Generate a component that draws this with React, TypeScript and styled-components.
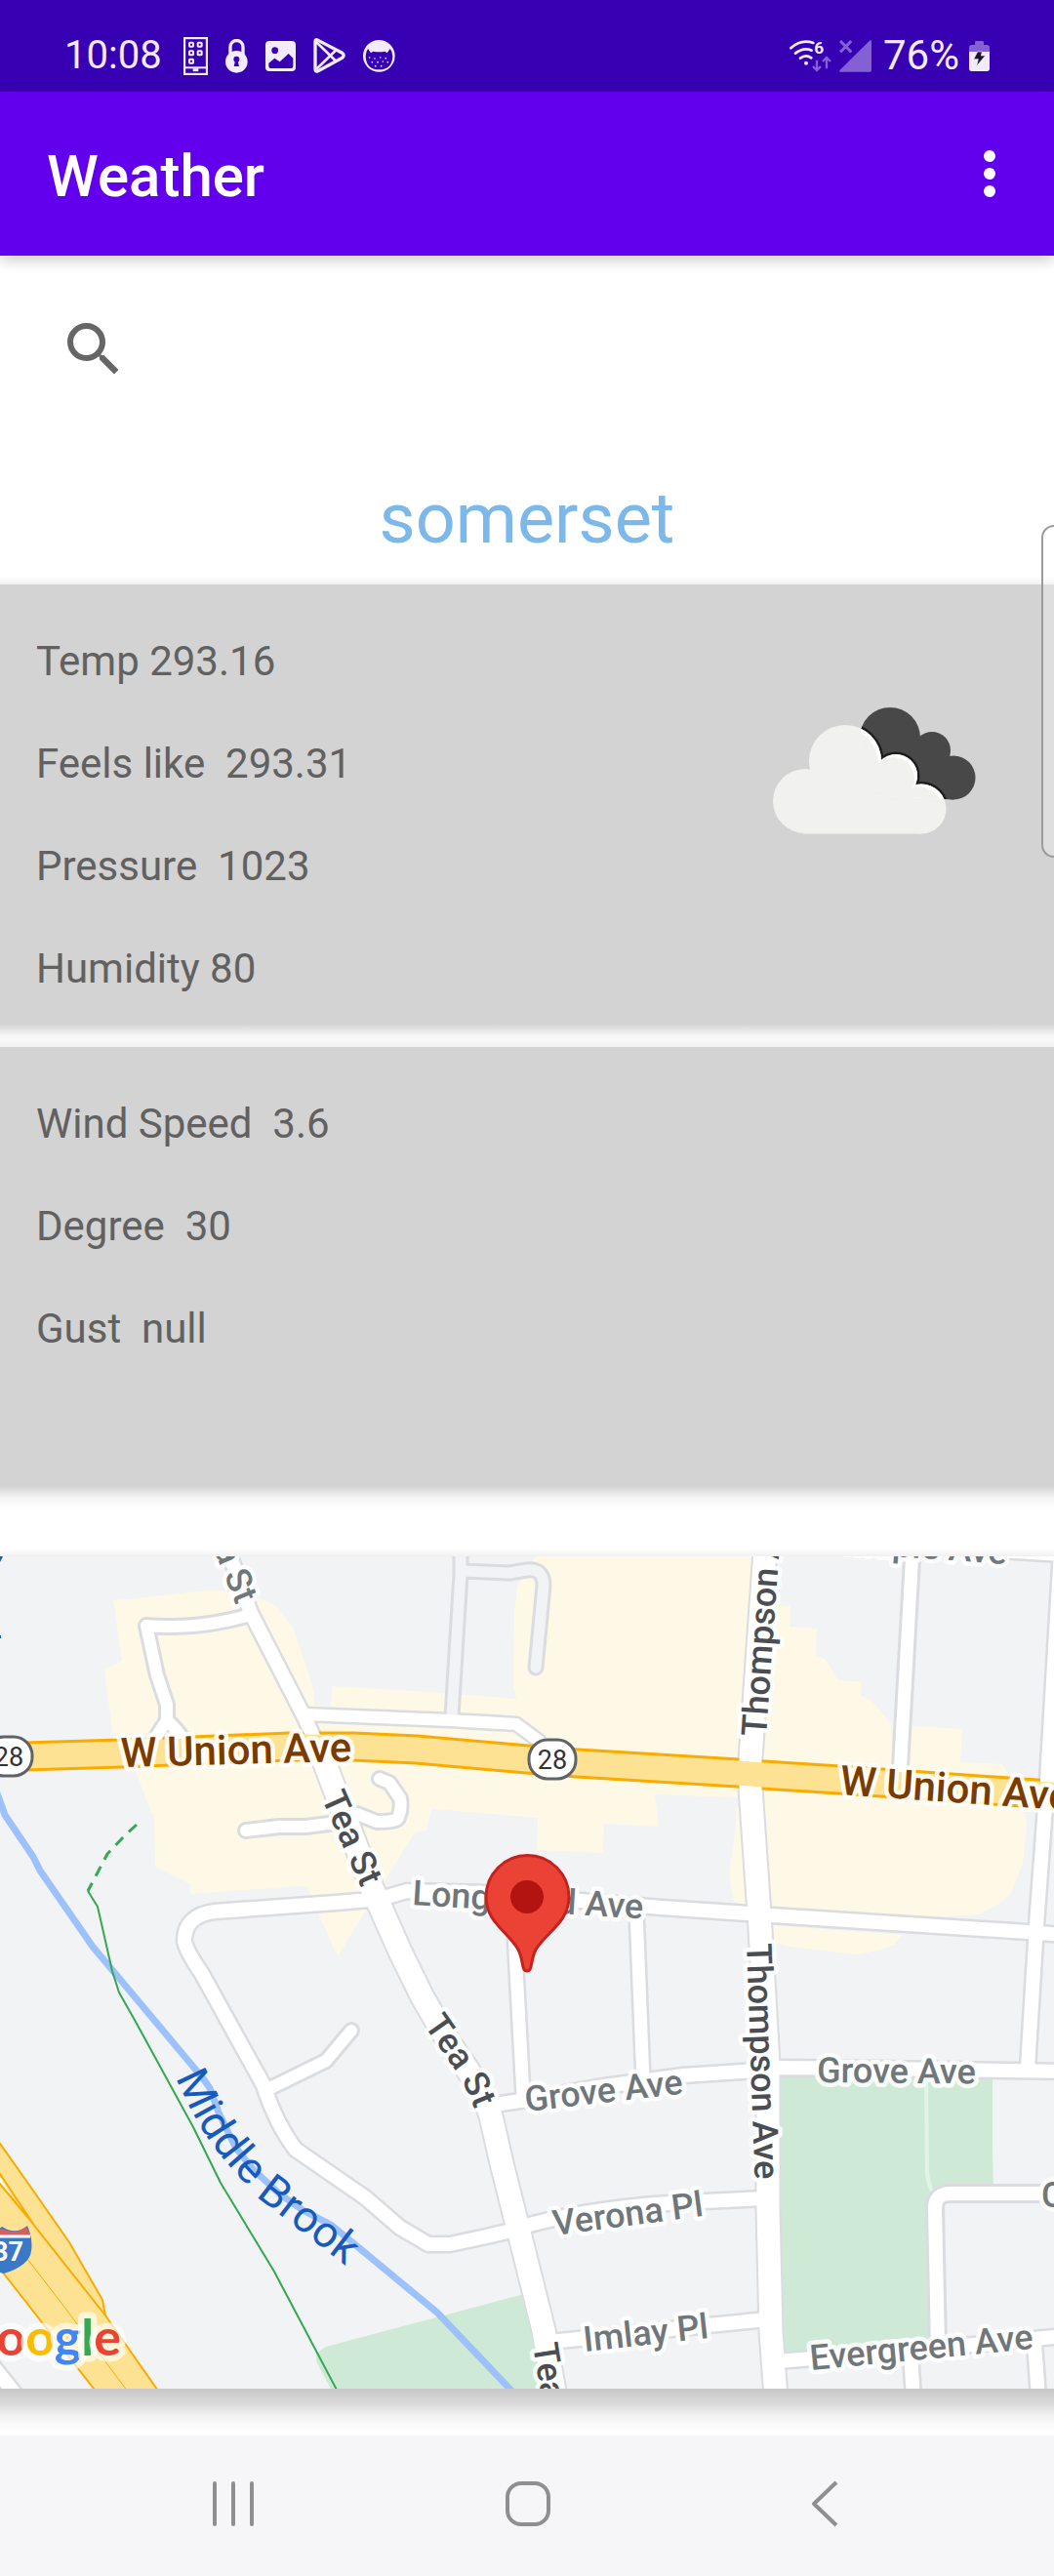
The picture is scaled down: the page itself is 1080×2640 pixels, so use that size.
import React from "react";
import styled, { createGlobalStyle } from "styled-components";

const GlobalStyle = createGlobalStyle`
  *, *::before, *::after { box-sizing: border-box; }
  body {
    margin: 0;
    background: #fff;
    font-family: Roboto, "Noto Sans", sans-serif;
  }
  button {
    border: 0;
    padding: 0;
    background: none;
    font: inherit;
    color: inherit;
    cursor: pointer;
  }
  svg { display: block; }
`;

const INK = "#f1ebfc";
const DIM = "#8360d3";
const BAR = "#3700b3";

const Screen = styled.div`
  position: relative;
  display: flex;
  flex-direction: column;
  min-height: 100vh;
  overflow: hidden;
`;

const StatusBar = styled.div`
  display: flex;
  align-items: center;
  justify-content: space-between;
  height: 94px;
  padding: 20px 66px 0;
  background: ${BAR};
  color: ${INK};
  line-height: 48px;
`;

const StatusGroup = styled.div<{ $gap: number }>`
  display: flex;
  align-items: center;
  gap: ${(p) => p.$gap}px;
`;

const Clock = styled.span`
  margin-right: 4px;
  font-size: 40px;
`;

const Battery = styled.span`
  margin: 0 2px 0 4px;
  font-size: 42px;
`;

const AppBar = styled.header`
  position: relative;
  z-index: 1;
  display: flex;
  align-items: center;
  justify-content: space-between;
  height: 168px;
  padding: 0 30px 0 48px;
  background: #6200ee;
  color: #fff;
  box-shadow: 0 4px 14px rgba(0, 0, 0, 0.22);
`;

const AppTitle = styled.h1`
  margin: 0;
  padding-top: 6px;
  font-size: 60px;
  font-weight: 500;
  line-height: 72px;
`;

const IconButton = styled.button`
  display: block;
  width: 72px;
  height: 72px;
`;

const Main = styled.main`
  display: flex;
  flex-direction: column;
`;

const SearchRow = styled.div`
  padding: 60px 60px 96px;
  color: #666;
`;

const City = styled.h2`
  margin: 0 0 25px;
  color: #7cb8e9;
  font-size: 72px;
  font-weight: 400;
  line-height: 84px;
  text-align: center;
`;

/* A full-width block: its shadow runs evenly from edge to edge. */
const Raised = styled.section`
  position: relative;

  &::before,
  &::after {
    content: "";
    position: absolute;
    left: 0;
    right: 0;
    pointer-events: none;
  }
  &::before {
    bottom: 100%;
    height: 8px;
    background: linear-gradient(transparent, rgba(0, 0, 0, 0.06));
  }
`;

const Card = styled(Raised)`
  display: flex;
  justify-content: space-between;
  min-height: 451px;
  margin-bottom: 23px;
  padding: 26px 80px 5px 37px;
  background: #d3d3d3;
  color: #616161;

  &::after {
    top: 100%;
    height: 23px;
    background: linear-gradient(rgba(0, 0, 0, 0.16), rgba(0, 0, 0, 0.04) 50%, transparent);
  }
`;

const Reading = styled.p`
  margin: 0;
  font-size: 42px;
  line-height: 105px;
  white-space: pre;
`;

const Sky = styled.div`
  padding-top: 100px;
`;

const MapCard = styled(Raised)`
  margin-top: 48px;
  background: #f1f3f4;

  &::after {
    top: 100%;
    height: 45px;
    background: linear-gradient(
      rgba(0, 0, 0, 0.22),
      rgba(0, 0, 0, 0.15) 33%,
      rgba(0, 0, 0, 0.06) 60%,
      rgba(0, 0, 0, 0.02) 80%,
      transparent
    );
  }
`;

const MapCanvas = styled.svg`
  width: 100%;
  height: auto;
  font-family: Roboto, sans-serif;
`;

const EdgeHandle = styled.div`
  position: absolute;
  z-index: 2;
  top: 538px;
  right: 0;
  width: 13px;
  height: 341px;
  border: 2px solid #9b9b9b;
  border-right: 0;
  border-radius: 14px 0 0 14px;
  background: rgba(255, 255, 255, 0.25);
`;

const NavBar = styled.nav`
  display: flex;
  justify-content: center;
  height: 144px;
  margin-top: auto;
  padding: 0 0 4px 2px;
  background: #f6f6f8;
  color: #8f8f8f;
`;

const NavButton = styled.button`
  display: flex;
  align-items: center;
  justify-content: center;
  width: 28%;
`;

/* ---------- status icons ---------- */

const PhoneIcon = () => (
  <svg width="25" height="39" viewBox="0 0 75 117" fill="none" stroke={INK}>
    <rect x="3" y="3" width="69" height="111" strokeWidth="7" />
    {[[18, 17], [44, 17], [18, 43], [44, 43], [18, 68]].map(([x, y]) => (
      <rect key={`${x}-${y}`} x={x} y={y} width="12" height="12" rx="2" strokeWidth="6" />
    ))}
    <path d="M3 94h69" strokeWidth="6" />
    <path d="M29 101h17" strokeWidth="9" />
  </svg>
);

const LockIcon = () => (
  <svg width="23" height="35" viewBox="0 0 69 105">
    <path d="M15 52V24a19 19 0 0 1 39 0v28" fill="none" stroke={INK} strokeWidth="10" />
    <circle cx="34" cy="70" r="34" fill={INK} />
    <circle cx="34" cy="62" r="9" fill={BAR} />
    <path d="M31 64h6l5 20H26z" fill={BAR} />
  </svg>
);

const PictureIcon = () => (
  <svg width="31" height="31" viewBox="0 0 93 93">
    <rect width="93" height="93" rx="12" fill={INK} />
    <circle cx="29" cy="29" r="10" fill={BAR} />
    <path d="M10 68 28 53l16 11 27-25 14 14v25q0 6-6 6H16q-6 0-6-6z" fill={BAR} />
  </svg>
);

const PlayIcon = () => (
  <svg width="33" height="36" viewBox="0 0 99 108" fill="none" stroke={INK} strokeWidth="10" strokeLinejoin="round">
    <path d="M6 11q0-9 9-4l74 39q9 7 0 15L15 101q-9 4-9-5z" />
    <path d="m9 12 62 60M9 96l62-60" strokeWidth="8" />
  </svg>
);

const CatIcon = () => (
  <svg width="33" height="33" viewBox="0 0 99 99">
    <circle cx="49" cy="49" r="49" fill={INK} />
    <path d="M8 50q0-14 7-23l9 13 7-5q18 4 36 0l7 5 9-13q8 9 8 23-2 41-42 41Q10 91 8 50z" fill={BAR} />
    <g fill={INK}>
      {[[20, 54], [36, 57], [53, 54], [70, 56], [28, 68], [45, 68], [61, 66], [76, 68], [38, 80], [56, 80]].map(([x, y]) => (
        <circle key={`${x}-${y}`} cx={x} cy={y} r="2.5" />
      ))}
    </g>
  </svg>
);

const WifiIcon = () => (
  <svg width="43" height="33" viewBox="0 0 129 99">
    <g fill="none" stroke={INK} strokeWidth="8" strokeLinecap="round">
      <path d="M4 25Q36-4 73 9" />
      <path d="M18 41q26-20 50-9" />
      <path d="M33 56q17-13 34-1" />
    </g>
    <circle cx="51" cy="71" r="6" fill={INK} />
    <text x="76" y="43" fontSize="52" fontWeight="700" fill={INK}>6</text>
    <g fill="none" stroke={DIM} strokeWidth="7">
      <path d="M84 62v31m-12-12 12 12 12-12" />
      <path d="M114 88V54m-12 12 12-12 12 12" />
    </g>
  </svg>
);

const SignalIcon = () => (
  <svg width="33" height="33" viewBox="0 0 99 99">
    <path d="M3 98q-5-1-1-6L93 2q6-4 6 3v88q0 5-5 5z" fill={DIM} />
    <path d="m3 3 34 34M37 3 3 37" stroke={DIM} strokeWidth="9" />
  </svg>
);

const BatteryIcon = () => (
  <svg width="21" height="31" viewBox="0 0 63 93">
    <path d="M18 12V4q0-4 4-4h19q4 0 4 4v8h10q8 0 8 8v14H0V20q0-8 8-8z" fill={DIM} />
    <path d="M0 33h63v52q0 8-8 8H8q-8 0-8-8z" fill={INK} />
    <path d="M26 33h14l-3 12h13L23 77l5-21H14z" fill="#1b1624" stroke={INK} strokeWidth="2" />
  </svg>
);

/* ---------- weather icon ---------- */

const cloudShape = (
  <>
    <circle cx="33" cy="96" r="33" />
    <circle cx="74" cy="55" r="37" />
    <circle cx="126" cy="70" r="22" />
    <circle cx="152" cy="104" r="25.5" />
    <path d="M30 129V95l20-30h85l17 40v24.500H32z" />
  </>
);

const darkShape = (
  <>
    <circle cx="120" cy="31" r="31" />
    <circle cx="163" cy="44" r="19" />
    <circle cx="185" cy="72" r="22.500" />
    <path d="M100 30h50l32 20 3 44.500L100 90z" />
  </>
);

const CloudsIcon = () => (
  <svg width="208" height="130" viewBox="0 0 208 130" role="img" aria-label="Broken clouds">
    <clipPath id="rear-cloud">{darkShape}</clipPath>
    <g fill="#484849">{darkShape}</g>
    <g clipPath="url(#rear-cloud)" fill="#1d1d1e" stroke="#1d1d1e" strokeWidth="5">{cloudShape}</g>
    <g fill="#f1f1ef">{cloudShape}</g>
    <g clipPath="url(#rear-cloud)">
      <g fill="#fff">{cloudShape}</g>
      <g fill="#f1f1ef" transform="translate(-3 3)">{cloudShape}</g>
    </g>
  </svg>
);

/* ---------- map data ---------- */

type Road = { d: string; outer: number; inner: number; fill?: string };

const WHITE = "#fff";
const LAND = "#f1f3f4";

const roads: Road[] = [
  { d: "M463 164 472 18V-4M474 15 522 17 540 14Q557 12 557 30L549 114", outer: 17, inner: 11, fill: LAND },
  { d: "M257 60Q214 72 179 72 162 72 150 71L161 122 171 152V168L157 190M171 168Q182 178 191 192", outer: 18, inner: 12 },
  { d: "M252 281 286 277H313L345 273 366 264 386 272Q406 272 408 268 412 258 410 248L399 232 389 228", outer: 18, inner: 12 },
  { d: "M312 162 461 168 529 172 552 189", outer: 17, inner: 12 },
  { d: "M379 352 344 355 220 364Q189 368 189 394 190 403 207 428L270 542Q283 582 303 608L374 657 410 688 439 705H461L494 698 524 691", outer: 19, inner: 14 },
  { d: "M279 544 334 517 360 486", outer: 18, inner: 12 },
  { d: "M386 352 417 343 499 345 595 353 678 360 766 366 791 368 1053 385 1090 388", outer: 19, inner: 14 },
  { d: "M526 348 528 405 536 552", outer: 18, inner: 13 },
  { d: "M652 362 659 538", outer: 18, inner: 13 },
  { d: "M506 562 540 557 612 544 700 532 775 527 800 524 900 525 1090 528", outer: 19, inner: 14 },
  { d: "M530 688 571 678Q640 664 722 661L782 658", outer: 19, inner: 14 },
  { d: "M564 805 726 788 786 782", outer: 19, inner: 14 },
  { d: "M796 825 833 822 957 812 1090 799", outer: 19, inner: 14 },
  { d: "M933 818 936 862M1060 806 1064 862", outer: 19, inner: 14 },
  { d: "M1090 653H974Q958 653 958 668L961 810", outer: 20, inner: 14 },
  { d: "M935-6 922 225", outer: 19, inner: 13 },
  { d: "M1087-6 1073 230 1062 378 1053 524", outer: 19, inner: 14 },
  { d: "M850-17 1090-2", outer: 19, inner: 14 },
  { d: "M-8 829 20 864", outer: 19, inner: 14 },
  { d: "M233-8 257 58 312 165 330 204", outer: 19, inner: 14 },
  { d: "M332 210 382 342 410 405 433 452 461 500Q498 550 504 578L514 622 532 693 557 793 569 862", outer: 27, inner: 23 },
  { d: "M784-6 769 207 769 238 778 366 787 520V670L790 795 795 862", outer: 27, inner: 23 },
];

const unionAve = "M-10 206 124 202 296 195H362L427 198 540 208 592 212 756 222 782 224 860 229 1090 245";

type Label = { text: string; x: number; y: number; angle: number; kind: "local" | "main" | "highway"; end?: boolean };

const labelStyle = {
  local: { fill: "#70777b", size: 36 },
  main: { fill: "#4a4e53", size: 36 },
  highway: { fill: "#7a3b00", size: 42 },
};

const labels: Label[] = [
  { text: "Maple Ave", x: 1031, y: 8, angle: 4, kind: "local", end: true },
  { text: "Longwood Ave", x: 422, y: 357, angle: 3.5, kind: "local" },
  { text: "Grove Ave", x: 539, y: 569, angle: -6.500, kind: "local" },
  { text: "Grove Ave", x: 837, y: 539, angle: 0.500, kind: "local" },
  { text: "Verona Pl", x: 568, y: 696, angle: -7.500, kind: "local" },
  { text: "Imlay Pl", x: 599, y: 815, angle: -6.200, kind: "local" },
  { text: "Evergreen Ave", x: 831, y: 834, angle: -5.500, kind: "local" },
  { text: "C", x: 1067, y: 667, angle: 0, kind: "local" },
  { text: "Tea St", x: 242, y: 50, angle: 68, kind: "local", end: true },
  { text: "Tea St", x: 329, y: 247, angle: 66, kind: "main" },
  { text: "Tea St", x: 546, y: 808, angle: 81, kind: "main" },
  { text: "Thompson Ave", x: 785, y: 185, angle: -86, kind: "main" },
  { text: "Thompson Ave", x: 765, y: 397, angle: 88, kind: "main" },
  { text: "W Union Ave", x: 124, y: 216, angle: -1.500, kind: "highway" },
  { text: "W Union Ave", x: 860, y: 244, angle: 4, kind: "highway" },
];

const MapLabel = ({ text, x, y, angle, kind, end }: Label) => (
  <text
    transform={`translate(${x} ${y}) rotate(${angle})`}
    textAnchor={end ? "end" : "start"}
    fontSize={labelStyle[kind].size}
    fontWeight="500"
    fill={labelStyle[kind].fill}
    stroke="#fff"
    strokeOpacity="0.9"
    strokeWidth="9"
    strokeLinejoin="round"
    paintOrder="stroke"
  >
    {text}
  </text>
);

const RouteShield = ({ x, y }: { x: number; y: number }) => (
  <g>
    <rect x={x - 24} y={y - 20} width="48" height="40" rx="19" fill="#fff" stroke="#5f6368" strokeWidth="3" />
    <text x={x} y={y + 10} fontSize="27" textAnchor="middle" fill="#303337">28</text>
  </g>
);

const googleLetters: [string, string][] = [
  ["G", "#4285f4"],
  ["o", "#ea4335"],
  ["o", "#fbbc04"],
  ["g", "#4285f4"],
  ["l", "#34a853"],
  ["e", "#ea4335"],
];

const CityMap = () => (
  <MapCanvas viewBox="0 0 1080 853" role="img" aria-label="Map of Somerset">
    <rect width="1080" height="853" fill={LAND} />

    <g fill="#fef9e6">
      <path d="M116 45 131 44 210 35H227L255 38 282 50 300 73 314 113 322 140V153L338 154 341 133 455 140 529 146 526 132 527 58 530 32 537 18 549 0H784L768 247H754L671 244 675 277 619 274 618 304 550 301 551 268 442 259 437 281 425 283 394 333 375 363 346 410 327 368 315 339 306 338 195 346V336L159 318 158 265 155 264 139 220 116 187 107 116 125 107Z" />
      <path d="M780 51H810L809 72 837 74 836 101 846 106 859 127 883 129 882 143 893 148 908 165 913 172 914 215H932L934 174 986 177 984 211 1027 213 1032 222 1050 262 1052 275 1048 315 1035 347 1022 357 1003 367 967 369 775 360 752 354 748 333V318L752 292 755 258 768 240Z" />
      <path d="M790 378 925 388 916 398 900 404 876 408 809 400 790 395Z" />
    </g>
    <g fill="#ceead6">
      <path d="M796 530 1017 530V610L1018 650 970 655 955 660V812L798 820Z" />
      <path d="M545 754 334 810 324 817V825L339 853H570Z" />
    </g>
    <path d="M949 535 950 632Q951 644 957 654" fill="none" stroke="#e2f3e7" strokeWidth="4" />

    <g fill="none" strokeLinejoin="round">
      <path d="M-4 240 5 265 34 308 41 322 95 400 208 535 215 545 224 570 241 605 258 627 286 653 310 670 339 685 367 708 448 775 526 857" stroke="#9dc2fb" strokeWidth="7" />
      <path d="M140 275 127 287 110 305 90 343" stroke="#34a853" strokeWidth="3" strokeDasharray="11 8" />
      <path d="M90 343 100 359 115 425 122 447 139 477 198 585 226 642 281 733 346 856" stroke="#34a853" strokeWidth="2" />
    </g>

    <g stroke="#f9ab00" strokeWidth="2" fill="none" strokeLinejoin="round">
      <path d="M-4 596 34 650 71 703 105 762 108 778 164 858H100L3 734-4 724Z" fill="#fde293" />
      <path d="M-2 630 36 687 108 778M-2 641 34 684" />
      <path d="M28 720 65 768 131 856" strokeWidth="1" />
      <path d="M0 636 12 656 0 641Z" fill="#fff" stroke="none" />
    </g>

    <g fill="none" strokeLinecap="round" strokeLinejoin="round">
      {roads.map((r) => (
        <path key={r.d} d={r.d} stroke="#dadce0" strokeWidth={r.outer} />
      ))}
      <path d={unionAve} stroke="#f9ab00" strokeWidth="31" />
      {roads.map((r) => (
        <path key={r.d} d={r.d} stroke={r.fill ?? WHITE} strokeWidth={r.inner} />
      ))}
      <path d={unionAve} stroke="#fde293" strokeWidth="25" />
    </g>

    <path id="brook" d="M180 534Q202 586 230 619 250 642 270 662L380 747" fill="none" />
    <text fontSize="45" fill="#185abc">
      <textPath href="#brook">Middle Brook</textPath>
    </text>
    <path id="tea-bend" d="M434 480 462 520Q480 545 492 582" fill="none" />
    <text
      fontSize="36"
      fontWeight="500"
      fill={labelStyle.main.fill}
      stroke="#fff"
      strokeOpacity="0.9"
      strokeWidth="9"
      strokeLinejoin="round"
      paintOrder="stroke"
    >
      <textPath href="#tea-bend">Tea St</textPath>
    </text>

    {labels.map((l) => (
      <MapLabel key={`${l.text}-${l.x}`} {...l} />
    ))}

    <RouteShield x={9} y={205} />
    <RouteShield x={566} y={208} />

    <path d="M-22 690Q-10 696 2 687 16 696 28 686 34 700 32 712 30 727 4 735-22 727-24 712-26 700-22 690Z" fill="#3a78c8" />
    <path d="M-22 690Q-10 696 2 689 16 696 27 687L31 695V697H-24Z" fill="#d66060" />
    <path d="M-24 697H31" stroke="#fff" strokeWidth="3" />
    <text x="24" y="722" fontSize="27" fontWeight="700" textAnchor="end" fill="#fff">287</text>

    <path d="M0 0H3L0 6ZM0 81H1V84H0Z" fill="#185abc" />

    <text
      x="124"
      y="819"
      textAnchor="end"
      fontFamily="Lato, sans-serif"
      fontSize="52"
      fontWeight="700"
      stroke="#fff"
      strokeOpacity="0.65"
      strokeWidth="13"
      strokeLinejoin="round"
      paintOrder="stroke"
    >
      {googleLetters.map(([ch, fill], i) => (
        <tspan key={i} fill={fill}>{ch}</tspan>
      ))}
    </text>

    <path
      d="M540 425C534 425 537 415 531 403 521 385 498 375 498 349A42.500 42.500 0 0 1 583 349C583 375 560 385 549 403 543 415 546 425 540 425Z"
      fill="#ea4335"
      stroke="#c5221f"
      strokeWidth="3"
    />
    <circle cx="540" cy="349" r="17" fill="#b31412" />
  </MapCanvas>
);

/* ---------- screen ---------- */

const conditions = ["Temp 293.16", "Feels like  293.31", "Pressure  1023", "Humidity 80"];
const wind = ["Wind Speed  3.6", "Degree  30", "Gust  null"];

export default function App() {
  return (
    <Screen>
      <GlobalStyle />
      <StatusBar>
        <StatusGroup $gap={18}>
          <Clock>10:08</Clock>
          <PhoneIcon />
          <LockIcon />
          <PictureIcon />
          <PlayIcon />
          <CatIcon />
        </StatusGroup>
        <StatusGroup $gap={8}>
          <WifiIcon />
          <SignalIcon />
          <Battery>76%</Battery>
          <BatteryIcon />
        </StatusGroup>
      </StatusBar>

      <AppBar>
        <AppTitle>Weather</AppTitle>
        <IconButton aria-label="More options">
          <svg width="72" height="72" viewBox="0 0 24 24" fill="currentColor">
            <circle cx="12" cy="6" r="2" />
            <circle cx="12" cy="12" r="2" />
            <circle cx="12" cy="18" r="2" />
          </svg>
        </IconButton>
      </AppBar>

      <Main>
        <SearchRow>
          <IconButton aria-label="Search">
            <svg width="72" height="72" viewBox="0 0 24 24" fill="currentColor">
              <path d="M15.500 14h-.79l-.28-.27A6.471 6.471 0 0 0 16 9.500 6.500 6.500 0 1 0 9.500 16c1.610 0 3.090-.59 4.230-1.570l.27.28v.79l5 4.990L20.490 19l-4.990-5zm-6 0C7.010 14 5 11.990 5 9.500S7.010 5 9.500 5 14 7.010 14 9.500 11.990 14 9.500 14z" />
            </svg>
          </IconButton>
        </SearchRow>
        <City>somerset</City>

        <Card>
          <div>
            {conditions.map((line) => (
              <Reading key={line}>{line}</Reading>
            ))}
          </div>
          <Sky>
            <CloudsIcon />
          </Sky>
        </Card>
        <Card>
          <div>
            {wind.map((line) => (
              <Reading key={line}>{line}</Reading>
            ))}
          </div>
        </Card>

        <MapCard>
          <CityMap />
        </MapCard>
      </Main>

      <NavBar>
        <NavButton aria-label="Recent apps">
          <svg width="48" height="48" viewBox="0 0 48 48" stroke="currentColor" strokeWidth="4" strokeLinecap="round">
            <path d="M5 3v42M24 3v42M43 3v42" />
          </svg>
        </NavButton>
        <NavButton aria-label="Home">
          <svg width="48" height="48" viewBox="0 0 48 48" fill="none" stroke="currentColor" strokeWidth="4">
            <rect x="3" y="3" width="42" height="42" rx="14" />
          </svg>
        </NavButton>
        <NavButton aria-label="Back">
          <svg width="48" height="48" viewBox="0 0 48 48" fill="none" stroke="currentColor" strokeWidth="4">
            <path d="M38 2 15 24l23 22" strokeLinejoin="round" />
          </svg>
        </NavButton>
      </NavBar>

      <EdgeHandle />
    </Screen>
  );
}
